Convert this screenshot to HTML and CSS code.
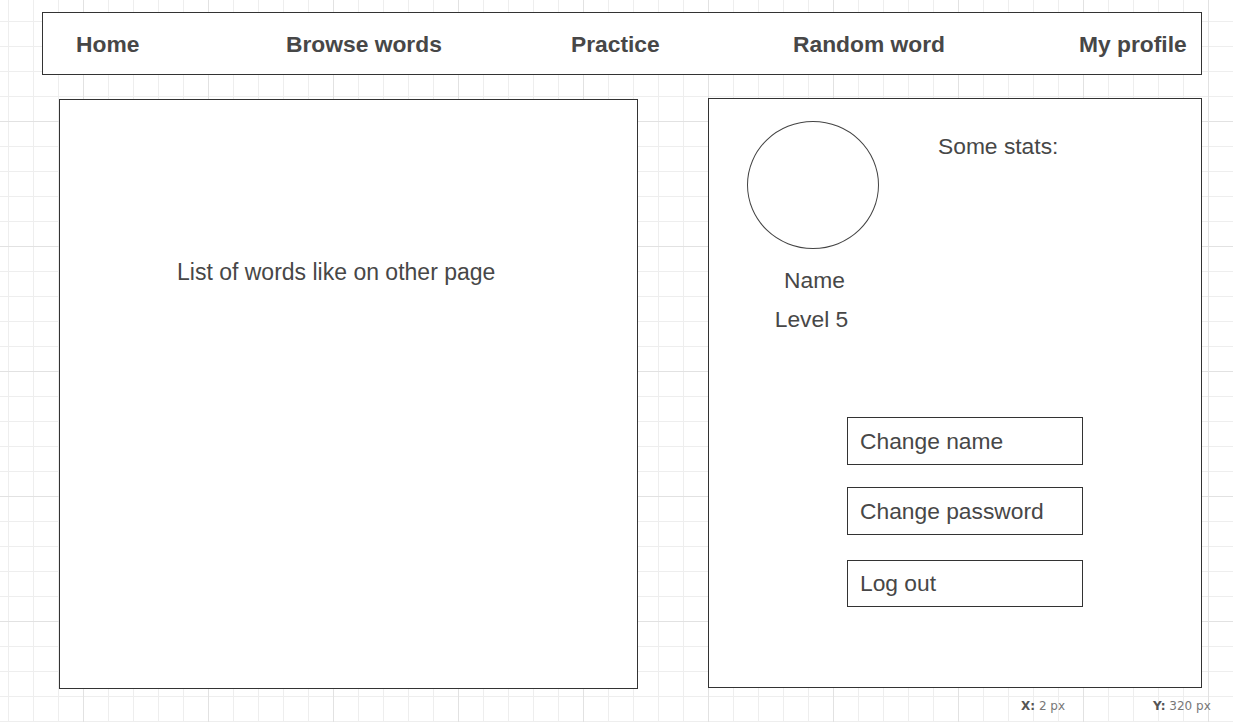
FILE: index.html
```html
<!DOCTYPE html>
<html lang="en">
<head>
<meta charset="utf-8">
<title>My profile</title>
<link rel="stylesheet" href="styles.css">
</head>
<body>
<div class="page">
  <nav class="nav">
    <span class="nav-item">Home</span>
    <span class="nav-item">Browse words</span>
    <span class="nav-item">Practice</span>
    <span class="nav-item">Random word</span>
    <span class="nav-item">My profile</span>
  </nav>
  <main class="main">
    <section class="panel words">
      <p class="words-text">List of words like on other page</p>
    </section>
    <section class="panel profile">
      <div class="profile-top">
        <div class="avatar-col">
          <div class="avatar"></div>
          <div class="name">Name</div>
          <div class="level">Level 5</div>
        </div>
        <div class="stats">Some stats:</div>
      </div>
      <div class="actions">
        <div class="action">Change name</div>
        <div class="action">Change password</div>
        <div class="action action-logout">Log out</div>
      </div>
    </section>
  </main>
</div>
<div class="coords">
  <span class="coord"><b>X:</b> 2 px</span>
  <span class="coord"><b>Y:</b> 320 px</span>
</div>
</body>
</html>
```
FILE: styles.css
```css
html, body {
  margin: 0;
  padding: 0;
}
body {
  width: 1233px;
  height: 722px;
  overflow: hidden;
  position: relative;
  font-family: "Liberation Sans", Arial, sans-serif;
  color: #474747;
  background-color: #fff;
  background-image:
    linear-gradient(to right, #e2e2e2 1px, transparent 1px),
    linear-gradient(to bottom, #e2e2e2 1px, transparent 1px),
    linear-gradient(to right, #eeeeee 1px, transparent 1px),
    linear-gradient(to bottom, #eeeeee 1px, transparent 1px);
  background-size: 125px 125px, 125px 125px, 25px 25px, 25px 25px;
  background-position: 83px 121px, 83px 121px, 8px 21px, 8px 21px;
}
.page {
  padding: 12px 0 0 42px;
}
.nav {
  box-sizing: border-box;
  width: 1160px;
  height: 63px;
  border: 1px solid #333;
  background: #fff;
  display: grid;
  grid-template-columns: 210px 285px 222px 286px auto;
  align-items: center;
  padding-left: 33px;
  font-weight: bold;
  font-size: 22.8px;
  line-height: 26px;
}
.main {
  display: flex;
  align-items: flex-start;
  gap: 70px;
  margin-top: 23px;
  padding-left: 17px;
}
.panel {
  box-sizing: border-box;
  border: 1px solid #333;
  background: #fff;
  height: 590px;
  font-size: 22.8px;
  line-height: 26px;
}
.words {
  width: 579px;
  margin-top: 1px;
  padding: 159px 0 0 117px;
}
.words-text {
  margin: 0;
  font-size: 23px;
}
.profile {
  width: 494px;
  padding: 22px 0 0 38px;
}
.profile-top {
  display: flex;
  align-items: flex-start;
}
.avatar-col {
  width: 132px;
  text-align: center;
}
.avatar {
  box-sizing: border-box;
  width: 132px;
  height: 128px;
  border: 1px solid #444;
  border-radius: 50%;
}
.name {
  margin-top: 18px;
  padding-left: 3px;
}
.level {
  margin-top: 13px;
  padding-right: 3px;
}
.stats {
  margin: 12px 0 0 59px;
}
.actions {
  display: flex;
  flex-direction: column;
  gap: 22px;
  margin: 85px 0 0 100px;
}
.action {
  box-sizing: border-box;
  width: 236px;
  height: 48px;
  border: 1px solid #333;
  padding: 10px 0 0 12px;
}
.action-logout {
  margin-top: 3px;
  height: 47px;
  padding-top: 9px;
}
.coords {
  position: absolute;
  left: 1021px;
  top: 699px;
  display: flex;
  gap: 88px;
  font-family: "DejaVu Sans", sans-serif;
  font-size: 12px;
  line-height: 14px;
  color: #777;
}
.coord b {
  color: #555;
}
```
